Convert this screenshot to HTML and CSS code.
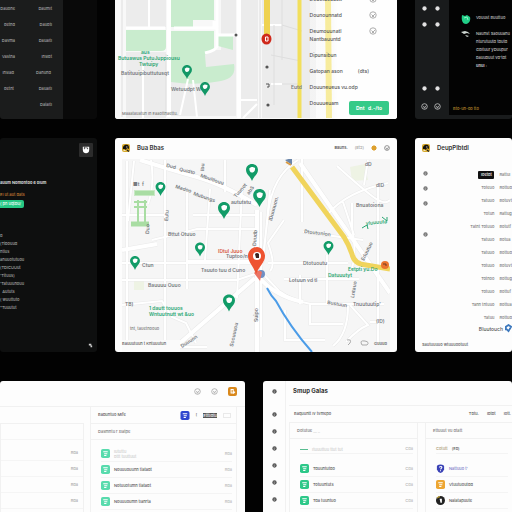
FILE: index.html
```html
<!DOCTYPE html>
<html lang="en">
<head>
    <meta charset="UTF-8">
    <meta name="viewport" content="width=device-width, initial-scale=1.0">
    <title>Map Dashboard</title>
    <link rel="stylesheet" href="styles.css">
</head>
<body>

    <!-- Shared icons -->
    <svg class="sprite" aria-hidden="true">
        <symbol id="pin" viewBox="0 0 12 17">
            <path d="M6 0C2.6 0 0 2.6 0 5.9 0 9 2 10.700 3.400 12.500 4.600 14 5.400 15.500 6 17c.6-1.500 1.400-3 2.600-4.500C10 10.700 12 9 12 5.900 12 2.600 9.400 0 6 0z"/>
            <path fill="#fff" d="M3.400 4c.8.5 1-.9 2.300-.9C7 3 8 4 9 3.700c.3 2-.4 4.800-3 4.900C3.800 8.500 3.100 6.300 3.400 4z"/>
        </symbol>
        <symbol id="dot" viewBox="0 0 6 6">
            <circle cx="3" cy="3" r="2.600" fill="currentColor"/>
            <path d="M2 2.500h2M2 4h1.500" stroke="#fff" stroke-width=".7" opacity=".7"/>
        </symbol>
        <symbol id="ring" viewBox="0 0 8 8">
            <circle cx="4" cy="4" r="3.200" fill="none" stroke="currentColor" stroke-width=".8"/>
            <path d="M2.500 3.500l1.500 1.500 2-2M3 5.500h2" fill="none" stroke="currentColor" stroke-width=".8"/>
        </symbol>
        <symbol id="doc" viewBox="0 0 10 10">
            <rect width="10" height="10" rx="2"/>
            <path d="M2.500 3h5M3.500 5.200h3.500M3.500 7.200h2.500" stroke="#fff" stroke-width="1.200"/>
        </symbol>
        <symbol id="shield" viewBox="0 0 10 10">
            <path d="M1 2q4-3 8 0v4q-1 3-4 4-3-1-4-4z"/>
            <path d="M3.500 3.500q3-1.500 3 .5L5 6M5 7v1" fill="none" stroke="#fff" stroke-width="1.200"/>
        </symbol>
        <symbol id="face" viewBox="0 0 10 10">
            <circle cx="5" cy="5" r="5"/>
            <path d="M1.500 2.500q1-2 3-1.500" fill="none" stroke="#ddb62f" stroke-width="1.200"/>
            <path d="M4 3h2.500v4.500H5z" fill="#fff"/>
        </symbol>
        <symbol id="logo" viewBox="0 0 8 8">
            <rect width="8" height="8" rx="2" fill="#d6a92c"/>
            <path d="M1 5C.5 2 3 .2 5 .8 7 1.300 7 3 7 5L5 4 4 6 2.500 5z" fill="#17130c"/>
            <path d="M4 3h1.500M1.500 6.500h2" stroke="#fff" stroke-width=".7"/>
            <path d="M5 6l2 1.500" stroke="#222" stroke-width="1.200"/>
        </symbol>
    </svg>

    <main class="board">

        <!-- Top row -->
        <div class="row row-top">
            <section class="card dark values">
                <table class="value-table">
                    <tr><td>Dauone</td><td>Daumlt</td></tr>
                    <tr><td>detnd</td><td>Daudtl</td></tr>
                    <tr><td>Davma</td><td>Daualtl</td></tr>
                    <tr><td>Vastna</td><td>Insldt</td></tr>
                    <tr><td>Inslad&nbsp;</td><td>Danund&nbsp;</td></tr>
                    <tr><td>detnt&nbsp;</td><td>Daualtl</td></tr>
                    <tr><td></td><td>Daialtl</td></tr>
                </table>
            </section>

            <section class="card route">
                <svg class="map" viewBox="115 0 282 119">
                    <rect x="115" width="282" height="119" fill="#f8f8f8"/>
                    <path fill="#ececec" d="M126 0h22v27h-22zM150 0h16v27h-16zM126 52h40v66h-40zM170 50h66v66h-66zM221 0h15v116h-15zM241 0h17v118h-17zM262 0h54v118h-54z"/>
                    <path fill="#c9ecce" d="M171 0h43v20h-21v7h-22zM126 30h40v17q0 4-5 4h-35zM171 31h43v18l-9 6 1 12 28-3q3 14-13 17-24 5-50 1zM218 36h15v14l-15-4z"/>
                    <g fill="none" stroke="#fff">
                        <path stroke-width="4" d="M169 0v117M239 0v118"/>
                        <path stroke-width="3" d="M126 28h39M217 0v46q0 4-12 7M218 35h20M174 28h40v-7"/>
                        <path stroke-width="2" d="M149 0v27M143 66v52M188 79l-8 36M193 80l4 37M240 100h17M243 118l14-14M262 25h20M271 84h11"/>
                        <path stroke-width="1" stroke="#dedede" d="M122 0v117M166 54v62M260 0v118M274 25v80M282 0v60M282 25l20 6M271 55l30 6M282 84h20"/>
                    </g>
                    <path stroke="#f2df5c" stroke-width="4" d="M299.500 0v118"/>
                    <path stroke="#f2df5c" stroke-width="6" d="M328 0l1 118"/>
                    <path stroke="#efd251" stroke-width="6" d="M267 0v36"/>
                    <ellipse cx="266.500" cy="39" rx="5" ry="5.500" fill="#cf291b"/>
                    <path d="M265.500 37h2.500v4h-2.500z" fill="none" stroke="#fff"/>
                    <g fill="#555">
                        <circle cx="236" cy="35" r="1.500"/>
                        <circle cx="267" cy="67" r="1.600"/>
                        <circle cx="268" cy="105" r="1.600"/>
                    </g>
                    <path d="M266 84h3v3h-2" fill="none" stroke="#555"/>
                    <g class="label-green">
                        <text x="141" y="54">aus</text>
                        <text x="118" y="60">Butuawus PutuJuppiousu</text>
                        <text x="139" y="66">Twtuipy</text>
                    </g>
                    <g class="label">
                        <text x="121" y="75">Batituuipibuttutusqt</text>
                        <text x="171" y="91">Wetuudpt W</text>
                        <text x="291" y="89">Eutd</text>
                    </g>
                    <text class="label-thin" x="122" y="115">Maaatauatun ln Eaaottnaettu.</text>
                    <g fill="#129766">
                        <use href="#pin" x="182" y="65" width="10" height="14"/>
                        <use href="#pin" x="200" y="82" width="10" height="14"/>
                    </g>
                </svg>
                <div class="route-panel">
                    <ul class="stops">
                        <li>Douotuouustt<svg><use href="#ring"/></svg></li>
                        <li>Dounounnatd<svg><use href="#ring"/></svg></li>
                        <li>Deumouunatl<svg><use href="#ring"/></svg></li>
                        <li>Nantbauuntd</li>
                        <li>Dipunsibun</li>
                        <li>Gatopan ason <span>(dts)</span></li>
                        <li>Douuneueus vu.odp</li>
                        <li>Douuueuam</li>
                    </ul>
                    <button type="button" class="go-btn">Dnt&nbsp; &nbsp;d.-/to</button>
                </div>
            </section>

            <section class="card dark chat">
                <nav class="chat-nav">
                    <a href="#" aria-label="Home"><svg><use href="#dot"/></svg></a>
                    <a href="#" aria-label="Inbox"><svg><use href="#dot"/></svg></a>
                    <a href="#" aria-label="Files"><svg><use href="#dot"/></svg></a>
                    <a href="#" aria-label="Notes"><svg><use href="#dot"/></svg></a>
                    <a href="#" class="low" aria-label="People"><svg><use href="#dot"/></svg></a>
                    <a href="#" class="low" aria-label="Alerts"><svg><use href="#dot"/></svg></a>
                    <a href="#" class="big" aria-label="Help"><svg><use href="#ring"/></svg></a>
                    <a href="#" class="big" aria-label="Settings"><svg><use href="#ring"/></svg></a>
                </nav>
                <div class="chat-body">
                    <div class="message">
                        <svg viewBox="0 0 10 10"><path d="M1 1l3 1 2-1 3 2c1 3-1 7-4 7S0 7 1 1z" fill="#21cf88"/><path d="M3 4l3-1 1 3" fill="none" stroke="#8df2c4"/></svg>
                        <p>Vouust Buuttuo</p>
                    </div>
                    <div class="message">
                        <svg viewBox="0 0 10 10"><path d="M0 2l4-1 3 1 2 2-3-1-3 1zM4 5l4 1-2 1z" fill="#cfd8d3"/></svg>
                        <p>Naunst Saouuanu<br>nturutuutd tbutd<br>Gdltuur yDuupur<br>bauubuut vd'tdt<br><b>unul</b> :</p>
                    </div>
                    <a href="#" class="chat-link">Bto-un-do tto</a>
                </div>
            </section>
        </div>

        <!-- Middle row -->
        <div class="row row-middle">
            <section class="card dark profile">
                <button type="button" class="profile-btn" aria-label="Profile">
                    <svg viewBox="0 0 10 10"><path d="M1 1h8v4c0 3-2 4-4 4S1 8 1 5z" fill="#fff"/><path d="M3 1v3M5 1v2M7 2v2" stroke="#222"/></svg>
                </button>
                <h2>auum Nomontoo 6 olum</h2>
                <p class="profile-note">El ut aut dats</p>
                <button type="button" class="tag">( pn uqtbu/</button>
                <ul class="profile-list">
                    <li>d</li>
                    <li>(Tibouud</li>
                    <li>ntius</li>
                    <li>anuuotutuou</li>
                    <li>(TDICUUut</li>
                    <li>'Tituus)</li>
                    <li>'Tatuuunouu</li>
                    <li>&nbsp; Aututs</li>
                    <li>( wuuttuto</li>
                    <li>"Tuuutut</li>
                </ul>
                <svg class="corner" viewBox="0 0 6 6"><path d="M1 1h3v2h1v2H3V3H1z" fill="#ccc"/></svg>
            </section>

            <section class="card main-map">
                <header class="card-head">
                    <svg class="logo"><use href="#logo"/></svg>
                    <h1>Bua Bbas</h1>
                    <a href="#">Bauns.</a>
                    <a href="#" class="muted">(Et2)</a>
                    <svg class="sun" viewBox="0 0 6 6"><path d="M3 0l1 1h1v1l1 1-1 1v1H4L3 6 2 5H1V4L0 3l1-1V1h1z" fill="#dda02e"/></svg>
                    <svg class="ring"><use href="#ring"/></svg>
                </header>
                <svg class="map" viewBox="122 159 268 193">
                    <defs>
                        <g id="roads" fill="none">
                            <path d="M127 161v186h80M134 161l-6 60M151 160q4 25-3 44M122 215h45M122 280h115l24-8M122 263h130M165 160v190M187 191v98M187 275v-14h65M210 189l-5 71M193 215h64M152 240q30-7 45-11h60M225 160v32M242 188l-5 110M122 305l40-4 10 16 14 6 10 20"/>
                            <path d="M261 212v125M270 190l-7 72M264 275l15 16q14 10 32 13h73M298 160q-26 16-30 54t-8 60M284 220l-16 23q8 22 2 28M268 263h80M284 279h75M302 159v63M328 214q18-22 60-31M337 166q22 20 35 30t18 4M352 203v25q5 25 0 40M303 232l60 8M300 275v29M327 255v50M343 202l11 33M378 185v160M350 305l18 20q-10 4-22 17M348 306q0 28-15 40M285 310v30h40M384 322h-14M368 160l-4 25M310 304v20h33"/>
                        </g>
                        <g id="main-roads" fill="none">
                            <path d="M140 160q32 10 57 17t60 28M172 350l83-72M257 210v142M258 276q16 20 45 26M300 163l90 130M122 250l35-6"/>
                        </g>
                    </defs>
                    <rect x="122" y="159" width="268" height="193" fill="#f6f6f6"/>
                    <path fill="#eef3e4" d="M134 280h10v10h-10zM350 167l15-3 3 16-16 1z"/>
                    <use href="#roads" stroke="#e9e9e9" stroke-width="3"/>
                    <use href="#main-roads" stroke="#e9e9e9" stroke-width="5"/>
                    <use href="#roads" stroke="#fff" stroke-width="2"/>
                    <use href="#main-roads" stroke="#fff" stroke-width="4"/>
                    <path fill="#c9e9c5" d="M134 190h21v6h-21z"/>
                    <path fill="#a9dda3" d="M135 191h19v4h-19z"/>
                    <path fill="none" stroke="#a9dda3" stroke-width="2" d="M134 202h13M138 200v25M145 200v25M134 207h13"/>
                    <path stroke="#a9dda3" stroke-width="5" d="M131 224h18"/>
                    <path d="M292 167l52 70q5 8 8 17 2 10 14 11l24 4" fill="none" stroke="#f0d45c" stroke-width="5"/>
                    <path d="M267 288q4 8 9 13 14 26 36 51" fill="none" stroke="#4b9ce8" stroke-width="2"/>
                    <g class="label">
                        <text transform="translate(166 167) rotate(12)">Dud</text>
                        <text transform="translate(179 171) rotate(12)">Quidto</text>
                        <text transform="translate(200 177) rotate(19)">Mbuitlouu</text>
                        <text transform="translate(175 188) rotate(17)">Madoo</text>
                        <text transform="translate(193 195) rotate(19)">Mubungs</text>
                        <text transform="translate(236 198) rotate(-49)">Tuunot</text>
                        <text transform="translate(249 195) rotate(-55)">abS</text>
                        <text transform="translate(204 171) rotate(-88)">lbu</text>
                        <text x="231" y="204">aututstu</text>
                        <text transform="translate(168 221) rotate(-87)">Eutu</text>
                        <text transform="translate(149 234) rotate(-87)">Duo</text>
                        <text x="168" y="236">Bttut Otuuo</text>
                        <text transform="translate(272 221) rotate(-75)">lDuuuuon.</text>
                        <text transform="translate(256 246) rotate(-86)">Duudb</text>
                        <text transform="translate(304 233) rotate(7)">Dtoutunion</text>
                        <text x="356" y="207">Bnuatoiona</text>
                        <text x="303" y="265">Dtotuoutu</text>
                        <text x="289" y="282">Lotuun vd tl</text>
                        <text transform="translate(364 261) rotate(-64)">Eduutuo</text>
                        <text transform="translate(354 298) rotate(-81)">Lntauo</text>
                        <text transform="translate(327 304) rotate(9)">Bustuun</text>
                        <text x="353" y="306">Tnuutuutip'</text>
                        <text x="201" y="272">Tsuuto tuu d Cuno</text>
                        <text x="226" y="258">Tuptoo/n</text>
                        <text x="142" y="267">Ctun</text>
                        <text x="148" y="287">Bauuuu Ouuo</text>
                        <text transform="translate(182 348) rotate(-33)">Duuuon</text>
                        <text transform="translate(233 347) rotate(-78)">Soouuuou</text>
                        <text transform="translate(258 322) rotate(-90)">Suipo</text>
                        <text x="125" y="306">TB)</text>
                        <text x="376" y="323">(ID)</text>
                        <text x="365" y="166">dD</text>
                        <text x="376" y="187">dID</text>
                        <text x="133" y="186">&#9632;t &nbsp;f</text>
                    </g>
                    <g class="label-green">
                        <text transform="translate(366 225) rotate(-5)">yluuuuto</text>
                        <text x="348" y="271">Eetpti yu.Do</text>
                        <text x="328" y="277">Datuuutyt</text>
                        <text x="149" y="310">1 dautt touuos</text>
                        <text x="149" y="316">Wntuutnutt wt &amp;uo</text>
                    </g>
                    <path d="M362 228l5-3 1 4M382 217l5 4v-4" fill="none" stroke="#2aa673"/>
                    <text class="label-red" x="218" y="253">IDtul Juuo</text>
                    <g class="label-thin">
                        <text x="130" y="330">tnt, tauetnoouo</text>
                        <text x="374" y="345" font-weight="700">Guuub</text>
                    </g>
                    <path d="M347 340q5-1 3 3l-2 2M362 345q-3-5 3-4 5 1 2 4z" fill="none" stroke="#aaa"/>
                    <path d="M285 160l7-2v7z" fill="#6b86aa"/>
                    <path d="M286 162l5 3" stroke="#d99a42" stroke-width="2"/>
                    <g fill="#129c68">
                        <use href="#pin" x="155" y="182" width="11" height="14"/>
                        <use href="#pin" x="246" y="164" width="12" height="17"/>
                        <use href="#pin" x="253" y="189" width="13" height="18"/>
                        <use href="#pin" x="218" y="201" width="12" height="19"/>
                        <use href="#pin" x="195" y="242" width="10" height="15"/>
                        <use href="#pin" x="130" y="256" width="10" height="14"/>
                        <use href="#pin" x="223" y="294" width="12" height="18"/>
                        <use href="#pin" x="323" y="241" width="11" height="14"/>
                    </g>
                    <circle cx="261" cy="274" r="4" fill="#6f8fc4"/>
                    <path d="M254 273q4-4 8-1l-2 9z" fill="#ea7465"/>
                    <path d="M257 247c-5 0-9 4-9 9 0 6 5 9 8 18 4-9 9-12 9-18 0-5-4-9-8-9z" fill="#ee5331"/>
                    <circle cx="257" cy="256" r="4" fill="#fff"/>
                    <path d="M255 254q2-2 4 0v4h-3z" fill="#3d2420"/>
                    <circle cx="385" cy="265" r="4" fill="#eb742e"/>
                    <path d="M383 264h3v2" fill="none" stroke="#713b24"/>
                </svg>
                <footer class="map-foot">Bauuutuun t Kntuuutun</footer>
            </section>

            <section class="card schedule">
                <header class="card-head">
                    <svg class="logo"><use href="#logo"/></svg>
                    <h2>DeupPlbtdl</h2>
                </header>
                <div class="schedule-body">
                    <nav class="schedule-nav">
                        <a href="#" aria-label="Search"><svg><use href="#dot"/></svg></a>
                        <a href="#" aria-label="Places"><svg><use href="#dot"/></svg></a>
                        <a href="#" aria-label="Times"><svg><use href="#dot"/></svg></a>
                        <a href="#" class="last" aria-label="Options"><svg><use href="#dot"/></svg></a>
                    </nav>
                    <table class="schedule-table">
                        <tr><th><button type="button" class="badge">Ioetdt</button></th><th>Rattul</th></tr>
                        <tr><td>Toteuo</td><td>Rottud</td></tr>
                        <tr><td>Tatuuo</td><td>Botuvt</td></tr>
                        <tr><td>Totun</td><td>Rattug</td></tr>
                        <tr><td>Tatnt Totuuo</td><td>Botutf</td></tr>
                        <tr><td>Tatuuo</td><td>Botua</td></tr>
                        <tr><td>Tatuuo</td><td>Bottud</td></tr>
                        <tr><td>Totuuo</td><td>Botuvt</td></tr>
                        <tr><td>Totnoo</td><td>Bottug</td></tr>
                        <tr><td>Totuuo</td><td>Bottuf</td></tr>
                        <tr><td>Tann tntuuo</td><td>Bottua</td></tr>
                        <tr><td>Tatuu</td><td>Rottud</td></tr>
                    </table>
                </div>
                <p class="schedule-more">Bluutouch <svg viewBox="0 0 8 10"><path d="M1 6V3l3-2 3 2-3 5-2-2z" fill="none" stroke="#3d78bd" stroke-width="2"/></svg></p>
                <footer>Sautuuuuo wtuuuootuut</footer>
            </section>
        </div>

        <!-- Bottom row -->
        <div class="row row-bottom">
            <section class="card files">
                <header class="files-head">
                    <svg><use href="#ring"/></svg>
                    <svg><use href="#ring"/></svg>
                    <button type="button" aria-label="Export">
                        <svg viewBox="0 0 10 10"><path d="M3 2h3v5H3zM6 5l2 1-2 2" fill="none" stroke="#fff" stroke-width="1.500"/></svg>
                    </button>
                </header>
                <div class="files-body">
                    <ul class="panel plain">
                        <li></li>
                        <li>Rda</li>
                        <li>Rda</li>
                        <li>Rda</li>
                        <li>Rda</li>
                    </ul>
                    <div class="panel">
                        <div class="toolbar">
                            <span class="grow">Babuntuo Mlfe</span>
                            <svg class="blue"><use href="#doc"/></svg>
                            <span>[</span>
                            <button type="button" class="code">EtttIdtu</button>
                            <span class="outline"></span>
                        </div>
                        <h3>Dasmntu r xlatpe</h3>
                        <ul class="items soft">
                            <li><svg><use href="#doc"/></svg><span class="faint">Iututtu<br>bttt tuuttuut</span><em>Rda</em></li>
                            <li><svg><use href="#doc"/></svg><span>Nouuuouunn tiatadt</span><em>Rda</em></li>
                            <li><svg><use href="#doc"/></svg><span>Notuuotumn tiatadt</span><em>Rda</em></li>
                            <li><svg><use href="#doc"/></svg><span>Nouuuoumn tlanrta</span><em>Rda</em></li>
                            <li><svg><use href="#doc"/></svg></li>
                        </ul>
                    </div>
                </div>
            </section>

            <section class="card group">
                <nav class="group-nav">
                    <a href="#" aria-label="Profile"><svg><use href="#dot"/></svg></a>
                    <a href="#" aria-label="Home"><svg><use href="#dot"/></svg></a>
                    <a href="#" aria-label="Recent"><svg><use href="#dot"/></svg></a>
                    <a href="#" aria-label="Files"><svg><use href="#dot"/></svg></a>
                    <a href="#" aria-label="Groups"><svg><use href="#dot"/></svg></a>
                    <a href="#" aria-label="Tags"><svg><use href="#dot"/></svg></a>
                    <a href="#" aria-label="Settings"><svg><use href="#dot"/></svg></a>
                </nav>
                <div class="group-main">
                    <h2>Smup Galas</h2>
                    <div class="toolbar">
                        <span class="grow">Baquuntt lv tvmepo</span>
                        <a href="#">Tbtu.</a>
                        <a href="#">Ibtbt</a>
                        <a href="#">Iott.</a>
                    </div>
                    <div class="group-panels">
                        <div class="panel">
                            <h3>Dotutue <span class="faint">__ _</span></h3>
                            <ul class="items">
                                <li class="lead"><b></b><span class="faint">Ituuuttuu ttut tut</span><em>Cda</em></li>
                                <li><svg><use href="#doc"/></svg><span>Tduuntutdo</span><em>Cda</em></li>
                                <li><svg><use href="#doc"/></svg><span>Totuuntuts</span><em>Cda</em></li>
                                <li><svg><use href="#doc"/></svg><span>Tda tuuntuo</span><em>Cda</em></li>
                                <li><svg><use href="#doc"/></svg></li>
                            </ul>
                        </div>
                        <div class="panel open">
                            <h3>Ettuuut vu dtatt</h3>
                            <ul class="items">
                                <li class="lead"><span class="gold">Cotutt</span><span>(Eb)</span></li>
                                <li class="indigo"><svg><use href="#shield"/></svg><a href="#">Nattuuo t'</a></li>
                                <li class="amber"><svg><use href="#doc"/></svg><span>Vtuutuoutdd</span></li>
                                <li class="black"><svg><use href="#face"/></svg><span>Naiatapuute</span></li>
                                <li class="red"><svg><use href="#doc"/></svg></li>
                            </ul>
                        </div>
                    </div>
                </div>
            </section>
        </div>

    </main>

</body>
</html>
```

FILE: styles.css
```css
/* General styles */
* {
    box-sizing: border-box;
}

body {
    font-family: Inter, "Liberation Sans", sans-serif;
    font-size: 5px;
    font-weight: 500;
    line-height: 8px;
    color: #555;
    background-color: #020202;
    margin: 0;
}

h1, h2, h3, p, ul {
    margin: 0;
    padding: 0;
    font-size: inherit;
}

ul {
    list-style: none;
}

a {
    color: inherit;
    text-decoration: none;
}

button {
    font: inherit;
    border: none;
    padding: 0;
    cursor: pointer;
}

table {
    border-collapse: collapse;
}

th, td {
    padding: 0;
    font-weight: 500;
}

svg {
    display: block;
    flex: none;
}

.sprite {
    position: absolute;
    width: 0;
    height: 0;
}

/* Board */
.board {
    height: 100vh;
    overflow: hidden;
}

.row {
    display: grid;
    gap: 18px;
    grid-template-columns: 97fr 282fr 97fr;
}

.row-middle {
    margin: 19px 0 29px;
}

.row-bottom {
    grid-template-columns: 245fr 249fr;
}

.card {
    background-color: #fdfdfd;
    border-radius: 3px;
    overflow: hidden;
    min-width: 0;
    white-space: nowrap;
}

.row-top .card {
    border-radius: 0 0 3px 3px;
}

.row-bottom .card {
    border-radius: 3px 3px 0 0;
}

.dark {
    background-color: #0e0f0f;
    color: #aaa;
}

.map {
    width: 100%;
    height: auto;
}

.label, .label-green, .label-red {
    font-size: 5px;
    font-weight: 600;
    fill: #777b7f;
}

.label-green {
    fill: #2aa673;
}

.label-red {
    fill: #d85b43;
}

.label-thin {
    font-size: 4px;
    fill: #777;
}

.card-head {
    display: flex;
    align-items: center;
    gap: 7px;
    height: 21px;
    padding: 0 7px 2px 7px;
}

.card-head h1, .card-head h2 {
    flex: 1;
    color: #333;
    font-size: 6px;
    font-weight: 600;
}

.card-head a {
    font-size: 4px;
    font-weight: 600;
}

.logo {
    width: 8px;
    height: 8px;
}

/* Value list */
.values {
    background-color: #090909;
    min-height: 119px;
    display: flex;
}

.value-table {
    display: block;
    width: 65%;
    padding-top: 1px;
    background-color: #1b1c1c;
    font-size: 4px;
    text-align: right;
}

.value-table tr {
    height: 16px;
}

.value-table td:first-child {
    width: 15px;
}

.value-table td:last-child {
    width: 37px;
}

/* Route */
.route {
    position: relative;
    background-color: #fafafa;
}

.route-panel {
    position: absolute;
    top: 0;
    right: 0;
    bottom: 0;
    width: 31%;
    background-image: linear-gradient(90deg, rgba(255, 255, 255, 0.4) 26%, rgba(255, 255, 255, 0.9) 32%);
}

.stops {
    display: grid;
    grid-template-rows: 16px 16px 12px 12px;
    grid-auto-rows: 16px;
    align-items: center;
    margin-top: -9px;
    color: #555;
}

.stops li {
    display: flex;
    justify-content: space-between;
    align-items: center;
    padding-right: 20px;
}

.stops li:nth-child(3) {
    align-self: end;
}

.stops li:nth-child(4) {
    align-self: start;
}

.stops span {
    margin-right: 8px;
}

.stops svg {
    width: 8px;
    height: 8px;
    color: #999;
}

.go-btn {
    position: absolute;
    right: 8px;
    bottom: 4px;
    width: 40px;
    height: 14px;
    border-radius: 2px;
    background-color: #35ca88;
    color: white;
    font-weight: 700;
}

/* Chat */
.chat {
    display: flex;
    background-color: #191b1c;
    color: #c5c5c5;
}

.chat-nav {
    display: grid;
    grid-template-columns: 1fr 1fr;
    grid-template-rows: 16px 16px 64px 20px;
    width: 34px;
    padding: 0 5px 0 3px;
    color: #ddd;
}

.chat-nav a {
    display: grid;
    place-items: center;
}

.chat-nav .low {
    align-items: end;
    padding-bottom: 5px;
}

.chat-nav svg {
    width: 5px;
    height: 5px;
}

.chat-nav .big svg {
    width: 7px;
    height: 7px;
}

.chat-body {
    display: flex;
    flex: 1;
    flex-direction: column;
    gap: 6px;
    min-width: 0;
    margin-bottom: 4px;
    padding: 14px 0 2px 4px;
    background-color: #030303;
}

.message {
    display: flex;
    gap: 5px;
    padding-left: 8px;
    font-size: 4px;
}

.message svg {
    width: 10px;
    height: 10px;
}

.chat-link {
    margin-top: auto;
    color: #bd8d2c;
    font-size: 4px;
}

/* Profile */
.profile {
    display: flex;
    flex-direction: column;
    align-items: flex-start;
    padding: 5px 4px 4px 0;
    font-size: 4px;
}

.profile-btn {
    align-self: flex-end;
    width: 14px;
    height: 14px;
    padding: 3px;
    background-color: #2c2c2c;
    border-radius: 1px;
}

.profile h2 {
    margin-top: 22px;
    color: #ddd;
}

.profile-note {
    margin: 4px 0 1px;
    color: #ce8037;
}

.tag {
    height: 8px;
    border-radius: 0 2px 2px 0;
    background-color: #26c885;
    color: white;
    width: 24px;
    text-align: left;
}

.profile-list {
    margin: 24px 0 auto;
}

.corner {
    align-self: flex-end;
    width: 5px;
    height: 5px;
}

/* Main map */
.main-map {
    padding: 0 7px;
    display: grid;
}

.main-map .card-head {
    padding: 0 0 2px;
}

.main-map > * {
    grid-column: 1;
}

.main-map .map {
    grid-row: 2 / 4;
}

.map-foot {
    grid-row: 3;
    height: 12px;
    width: 58px;
    background-color: #fafafa;
    font-size: 4px;
}

.muted {
    color: #aaa;
}

.sun {
    width: 6px;
    height: 6px;
}

.ring {
    width: 6px;
    height: 6px;
}

/* Schedule */
.schedule {
    display: flex;
    flex-direction: column;
}

.schedule-body {
    display: flex;
    justify-content: space-between;
    padding-top: 9px;
}

.schedule-nav {
    padding: 2px 0 0 7px;
    color: #777;
}

.schedule-nav a {
    display: block;
    padding: 1px;
    margin-bottom: 8px;
}

.schedule-nav .last {
    margin-top: 24px;
}

.schedule-nav svg {
    width: 5px;
    height: 5px;
}

.schedule-table {
    font-size: 4px;
    text-align: right;
    color: #777;
}

.schedule-table tr {
    height: 13px;
}

.schedule-table td:last-child, .schedule-table th:last-child {
    padding-left: 5px;
    text-align: left;
}

.badge {
    width: 16px;
    height: 8px;
    border-radius: 1px;
    background-color: #111;
    color: white;
}

.schedule-more {
    display: flex;
    justify-content: flex-end;
    align-items: center;
    gap: 2px;
    margin-bottom: 6px;
}

.schedule-more svg {
    width: 7px;
    height: 9px;
}

.schedule footer {
    padding-left: 7px;
    margin: auto 0 3px;
    font-size: 4px;
}

/* Files */
.files-head {
    display: flex;
    justify-content: flex-end;
    align-items: center;
    gap: 10px;
    height: 25px;
    padding: 0 8px 4px 0;
    color: #999;
}

.files-head svg {
    width: 7px;
    height: 7px;
}

.files-head button {
    width: 9px;
    height: 9px;
    border-radius: 2px;
    background-color: #d9881c;
    padding: 1px;
}

.files-body {
    display: grid;
    grid-template-columns: 84fr 147fr;
    gap: 6px;
    padding-right: 8px;
    border-top: 1px solid #f1f1f1;
}

.panel {
    border: 1px solid #f1f1f1;
    border-top: none;
}

.panel h3 {
    height: 16px;
    padding-left: 7px;
    border-bottom: 1px solid #f1f1f1;
    line-height: 16px;
    font-size: 4px;
    font-weight: 500;
    color: #777;
}

.plain {
    margin-top: 16px;
    border-top: 1px solid #f1f1f1;
    font-size: 4px;
    text-align: right;
    color: #aaa;
}

.plain li {
    height: 16px;
    border-bottom: 1px solid #f5f5f5;
    padding: 4px 5px 0 0;
}

.plain li:nth-child(2) {
    margin-top: 5px;
}

.toolbar {
    display: flex;
    align-items: center;
    gap: 6px;
    height: 17px;
    padding: 0 5px 0 7px;
    border-bottom: 1px solid #f1f1f1;
    font-size: 4px;
}

.grow {
    flex: 1;
}

.blue {
    width: 10px;
    height: 9px;
    fill: #3047cf;
}

.code {
    height: 5px;
    line-height: 5px;
    background-color: #555;
    color: white;
}

.outline {
    width: 8px;
    height: 5px;
    border: 1px solid #e9e9e9;
}

.items {
    padding: 6px 4px 0 10px;
}

.items li {
    display: flex;
    align-items: center;
    gap: 4px;
    height: 16px;
    border-bottom: 1px solid #f4f4f4;
    fill: #2dc889;
    font-size: 4px;
}

.items svg {
    width: 9px;
    height: 9px;
}

.soft svg {
    fill: #58dbad;
}

.items em {
    margin-left: auto;
    color: #bbb;
    font-style: normal;
}

.faint {
    color: #ccc;
    line-height: 5px;
}

/* Group */
.group {
    display: flex;
}

.group-nav {
    display: flex;
    flex-direction: column;
    gap: 12px;
    width: 23px;
    padding: 8px 9px;
    border-right: 1px solid #f1f1f1;
    color: #555;
}

.group-nav a:first-child {
    margin-bottom: 6px;
}

.group-nav svg {
    width: 5px;
    height: 5px;
}

.group-main {
    flex: 1;
    padding-left: 3px;
}

.group-main h2 {
    height: 25px;
    padding: 6px 0 0 4px;
    border-bottom: 1px solid #f1f1f1;
    font-size: 6px;
    color: #333;
}

.group .toolbar {
    padding: 0 1px 0 5px;
    gap: 8px;
}

.group-panels {
    display: grid;
    grid-template-columns: 129fr 87fr;
    gap: 7px;
}

.open {
    border-right: none;
}

.items .lead {
    height: 15px;
    margin-top: -6px;
    margin-bottom: 7px;
    padding-top: 6px;
}

.lead b {
    width: 8px;
    height: 1px;
    background-color: #59bd91;
}

.gold {
    color: #a99a75;
}

.items .indigo {
    fill: #3a42b6;
    color: #7779c6;
}

.items .amber {
    fill: #eda633;
}

.items .black {
    fill: #222;
}

.items .red {
    fill: #cf4040;
}
```
